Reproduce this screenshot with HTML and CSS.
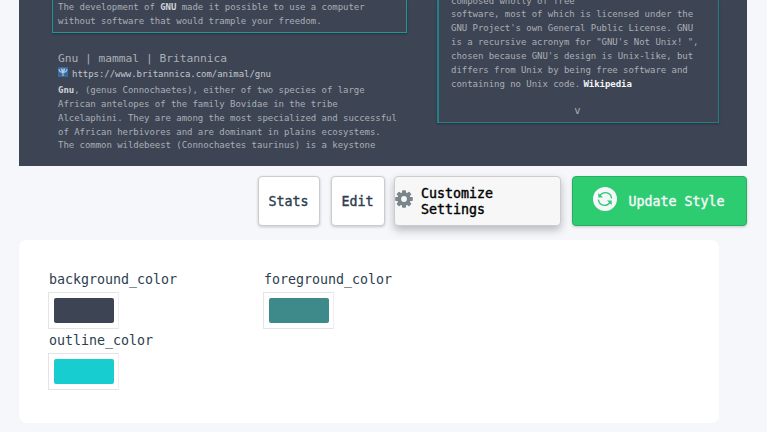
FILE: index.html
```html
<!DOCTYPE html>
<html lang="en">
<head>
<meta charset="utf-8">
<title>Style settings</title>
<link rel="stylesheet" href="styles.css">
</head>
<body>
<section class="preview">
  <div class="results">
    <div class="card featured">The development of <b>GNU</b> made it possible to use a computer<br>without software that would trample your freedom.</div>
    <div class="result">
      <h3>Gnu | mammal | Britannica</h3>
      <div class="url"><svg width="10" height="10" viewBox="0 0 10 10"><rect width="10" height="10" rx=".6" fill="#356aa5"/><path d="M1 2Q1 5 4.500 5.500M9 2Q9 5 5.500 5.500M3 1.500L4.500 5M7 1.500L5.500 5M5 1.500V9" fill="none" stroke="#b9c9d9" stroke-width="1.100"/></svg><span>https://www.britannica.com/animal/gnu</span></div>
      <p><b>Gnu</b>, (genus Connochaetes), either of two species of large<br>African antelopes of the family Bovidae in the tribe<br>Alcelaphini. They are among the most specialized and successful<br>of African herbivores and are dominant in plains ecosystems.<br>The common wildebeest (Connochaetes taurinus) is a keystone</p>
    </div>
  </div>
  <aside class="card summary">
    <p>composed wholly of free<br>software, most of which is licensed under the<br>GNU Project's own General Public License. GNU<br>is a recursive acronym for "GNU's Not Unix! ",<br>chosen because GNU's design is Unix-like, but<br>differs from Unix by being free software and<br>containing no Unix code. <b class="source">Wikipedia</b></p>
    <div class="more">v</div>
  </aside>
</section>
<nav class="actions">
  <button class="btn stats"><span>Stats</span></button>
  <button class="btn edit"><span>Edit</span></button>
  <button class="btn customize"><svg width="18" height="18" viewBox="-9 -9 18 18"><g fill="#7b858d"><circle r="6.7"/><g id="teeth"><rect x="-2" y="-8.8" width="4" height="17.6" rx=".8"/><rect x="-8.8" y="-2" width="17.6" height="4" rx=".8"/></g><use href="#teeth" transform="rotate(45)"/></g><circle r="2.9" fill="#f7f7f7"/></svg><span>Customize<br>Settings</span></button>
  <button class="btn update"><svg width="24" height="24" viewBox="0 0 24 24"><circle cx="12" cy="12" r="12" fill="#f5f7fb"/><g fill="none" stroke="#2ecc71" stroke-width="1.4"><path d="M6.500 9Q9 5.500 12.500 5.600Q18 6 18.600 11.400M17.500 15Q15 18.400 11.500 18.400Q6 18 5.400 12.600"/></g><path d="M5.300 6v4.400H10zM18.700 18v-4.400H14z" fill="#2ecc71"/></svg><span>Update Style</span></button>
</nav>
<section class="settings">
  <div class="field"><label>background_color</label><div class="swatch"><div class="fill slate"></div></div></div>
  <div class="field"><label>foreground_color</label><div class="swatch"><div class="fill teal"></div></div></div>
  <div class="field"><label>outline_color</label><div class="swatch"><div class="fill cyan"></div></div></div>
</section>
</body>
</html>
```
FILE: styles.css
```css
* { box-sizing: border-box; }
body { margin: 0; height: 432px; overflow: hidden; background: #f5f7fb; font-family: "DejaVu Sans Mono", monospace; }
h3, p { margin: 0; font-weight: 400; }
.preview { display: flex; align-items: flex-start; width: 728px; height: 166px; margin-left: 19px; background: #3d4555; color: #abaeb4; font-size: 9px; letter-spacing: -.04px; line-height: 13.85px; white-space: nowrap; overflow: hidden; }
.results { width: 355px; margin-left: 33px; }
.card { border: 1px solid #209498; box-shadow: 0 1px 2px #2b3341; }
.featured { height: 33px; border-top: 0; padding: 1px 0 0 5px; }
.result { padding: 18px 0 0 6px; }
.result h3 { font-size: 11.3px; letter-spacing: -.04px; line-height: 15px; }
.url { display: flex; gap: 4px; height: 17px; align-items: center; color: #c4c7cb; }
.url svg { margin-bottom: 6px; }
.result p { padding-top: 1px; }
.preview b { color: #d0d2d5; }
.preview .source { color: #f5f6f7; margin-left: -2px; }
.summary { width: 282px; height: 123px; margin-left: 30px; border-width: 0 1px 1px 2px; border-color: #247f86; padding-left: 12px; }
.summary p { margin-top: -5.5px; }
.more { margin: 13px 14px 0 0; text-align: center; font-size: 10.5px; }
.actions { display: flex; height: 50px; margin: 10px 0 0 258px; }
.btn { display: flex; align-items: center; justify-content: center; height: 50px; padding: 0 1px 0 0; border: 1px solid #ccc; border-radius: 4px; background: #fff; color: #2c3e50; font: 400 13.3px/16px "DejaVu Sans Mono", monospace; -webkit-text-stroke: .4px currentColor; box-shadow: 0 1px 3px rgba(0,0,0,.2); text-align: left; }
.btn span { padding-top: 2px; }
.stats { width: 62px; }
.edit { width: 54px; margin-left: 11px; }
.customize { width: 167px; margin-left: 9px; justify-content: flex-start; gap: 8px; background: #f7f7f7; color: #000; box-shadow: 0 4px 8px rgba(0,0,0,.25); }
.customize svg { margin-bottom: 4px; }
.update { width: 175px; margin-left: 11px; gap: 11px; border-color: #27ae60; background: #2ecc71; color: #f5f7fb; }
.update svg { margin-bottom: 5px; }
.settings { display: grid; grid-template-columns: 215px 215px; grid-auto-rows: 61px; align-content: start; width: 700px; height: 183px; margin: 14px 0 0 19px; padding: 31px 29px; border-radius: 8px; background: #fff; }
label { display: block; height: 21px; padding-left: 1px; color: #2c3e50; font-size: 13.3px; line-height: 18px; }
.swatch { width: 71px; height: 37px; padding: 5px; border: 1px solid #e4e4e4; border-right-color: #eee; }
.fill { width: 60px; height: 25px; border-radius: 2px; }
.slate { background: #3d4555; }
.teal { background: #3e8989; }
.cyan { background: #17cdcf; }
```
